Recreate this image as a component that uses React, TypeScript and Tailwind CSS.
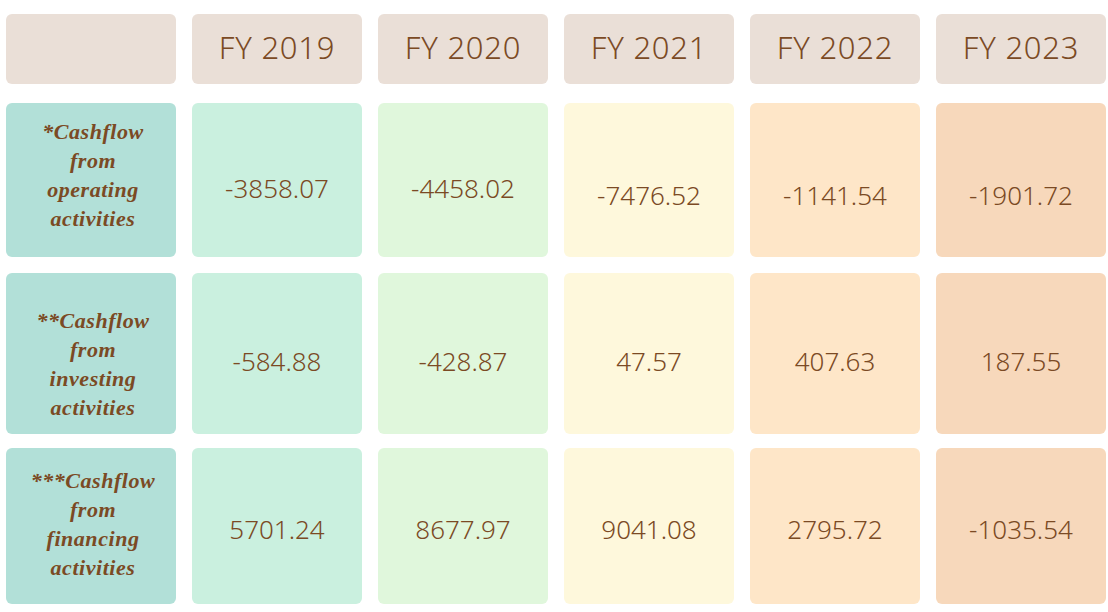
const YEARS = ["FY 2019", "FY 2020", "FY 2021", "FY 2022", "FY 2023"];

const COL_BG = ["bg-[#caf0df]", "bg-[#e0f7dc]", "bg-[#fef8dc]", "bg-[#fee6c8]", "bg-[#f7d8bb]"];

const ROWS = [
  {
    label: ["*Cashflow", "from", "operating", "activities"],
    values: ["-3858.07", "-4458.02", "-7476.52", "-1141.54", "-1901.72"],
    pad: ["pt-[16px]", "pt-[16px]", "pt-[30px]", "pt-[30px]", "pt-[30px]"],
    labelPad: "pb-[10px]",
    h: "h-[154px]",
    mt: "mt-[19px]",
  },
  {
    label: ["**Cashflow", "from", "investing", "activities"],
    values: ["-584.88", "-428.87", "47.57", "407.63", "187.55"],
    pad: ["pt-[16px]", "pt-[16px]", "pt-[16px]", "pt-[16px]", "pt-[16px]"],
    labelPad: "pt-[20px]",
    h: "h-[161px]",
    mt: "mt-[16px]",
  },
  {
    label: ["***Cashflow", "from", "financing", "activities"],
    values: ["5701.24", "8677.97", "9041.08", "2795.72", "-1035.54"],
    pad: ["pt-[6px]", "pt-[6px]", "pt-[6px]", "pt-[6px]", "pt-[6px]"],
    labelPad: "pb-[4px]",
    h: "h-[156px]",
    mt: "mt-[14px]",
  },
];

const cols = "grid grid-cols-[170px_170px_170px_170px_170px_170px] gap-x-[16px]";

export default function App() {
  return (
    <div className="h-[612px] w-[1108px] bg-white pl-[6px] pt-[14px] text-[#7b4a24]">
      {/* Header */}
      <div className={`${cols} h-[70px]`}>
        <div className="rounded-md bg-[#eadfd7]" />
        {YEARS.map((y) => (
          <div
            key={y}
            className="flex items-center justify-center rounded-md bg-[#eadfd7] pb-[4px] text-[31px] tracking-wide"
            style={{ fontFamily: '"Noto Sans", sans-serif', fontWeight: 300 }}
          >
            {y}
          </div>
        ))}
      </div>

      {ROWS.map((row) => (
        <div key={row.label[2]} className={`${cols} ${row.h} ${row.mt}`}>
          <div
            className={`flex flex-col items-center justify-center rounded-md bg-[#b2e0d8] ${row.labelPad} pl-[4px] text-[22px] font-bold italic leading-[29px] tracking-wide`}
            style={{ fontFamily: '"Liberation Serif", serif' }}
          >
            {row.label.map((l) => (
              <span key={l}>{l}</span>
            ))}
          </div>
          {row.values.map((v, i) => (
            <div
              key={i}
              className={`flex items-center justify-center rounded-md ${COL_BG[i]} ${row.pad[i]} text-[26px]`}
              style={{ fontFamily: '"Noto Sans", sans-serif', fontWeight: 300 }}
            >
              {v}
            </div>
          ))}
        </div>
      ))}
    </div>
  );
}
